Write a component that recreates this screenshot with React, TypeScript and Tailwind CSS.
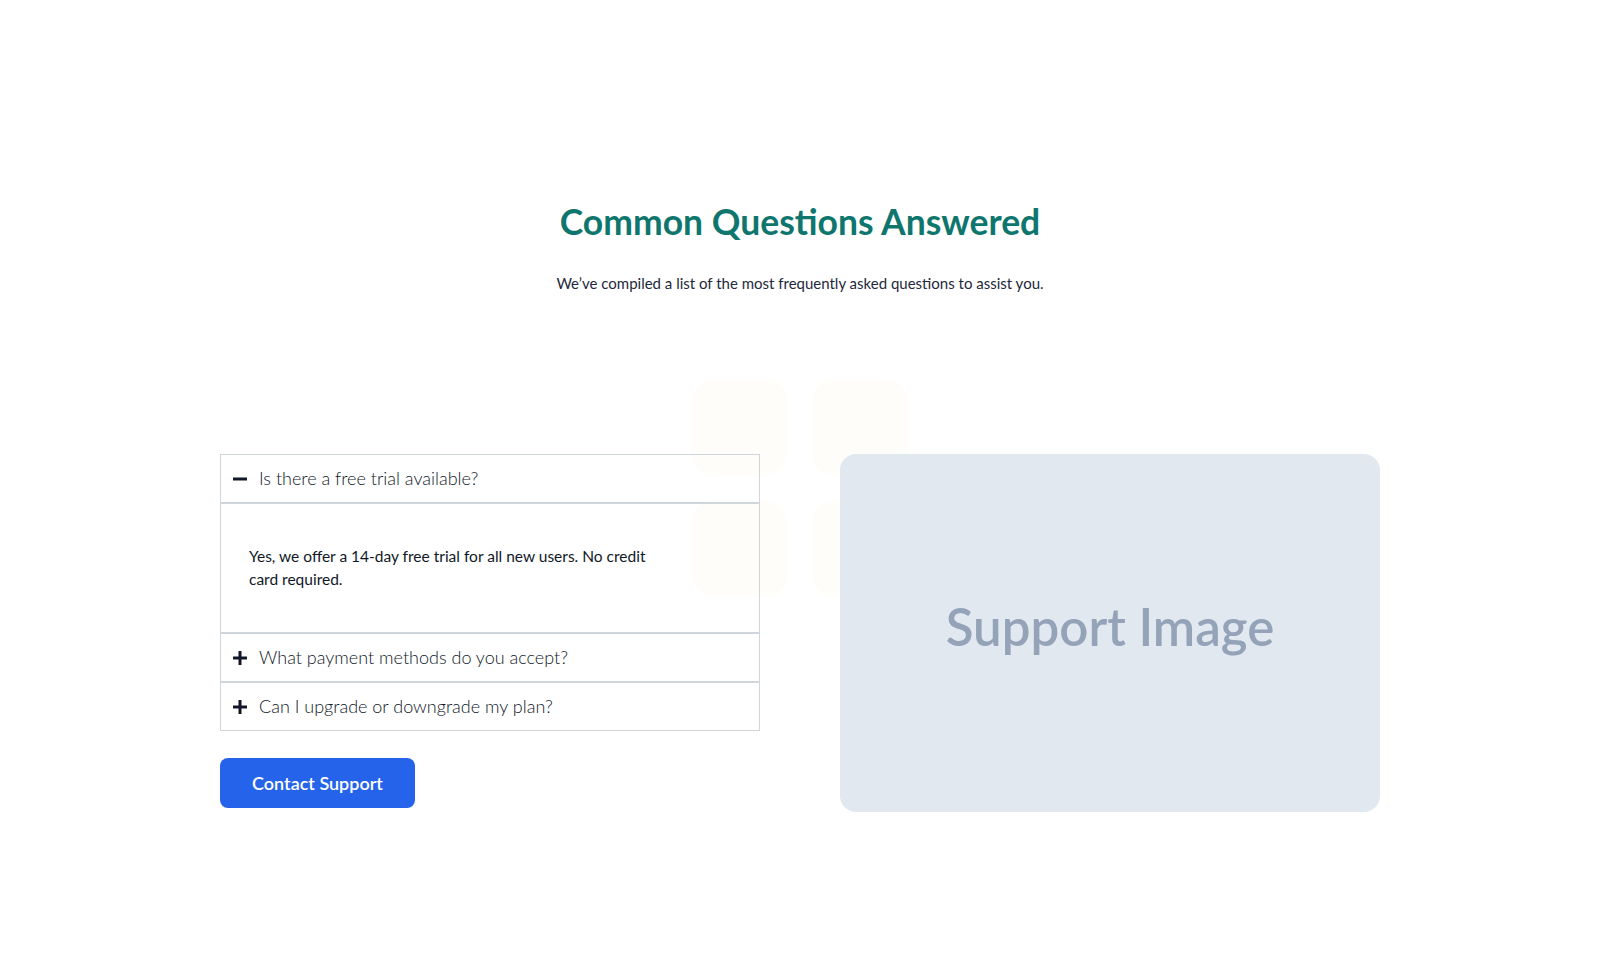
import { useState } from "react";

const faqs = [
  {
    q: "Is there a free trial available?",
    a: "Yes, we offer a 14-day free trial for all new users. No credit card required.",
  },
  {
    q: "What payment methods do you accept?",
    a: "We accept all major credit cards, PayPal and bank transfers.",
  },
  {
    q: "Can I upgrade or downgrade my plan?",
    a: "Yes, you can change your plan at any time from your account settings.",
  },
];

const PlusMinus = ({ open }: { open: boolean }) => (
  <svg width="14" height="14" viewBox="0 0 14 14" className="shrink-0 text-gray-900">
    <rect x="0" y="5.5" width="14" height="3" fill="currentColor" />
    {!open && <rect x="5.5" y="0" width="3" height="14" fill="currentColor" />}
  </svg>
);

export default function App() {
  const [openIdx, setOpenIdx] = useState<number | null>(0);

  return (
    <div className="min-h-screen bg-white" style={{ fontFamily: "Lato, 'Noto Sans', sans-serif" }}>
      <section className="relative mx-auto max-w-[1160px] pt-[200px]">
        {/* Heading */}
        <div className="text-center">
          <h2 className="text-[35.5px] leading-[44px] font-bold text-[#0f766e]">Common Questions Answered</h2>
          <p className="mt-[27px] text-[15px] leading-6 text-[#1e293b]">
            We’ve compiled a list of the most frequently asked questions to assist you.
          </p>
        </div>

        {/* Decorative squares */}
        <div className="pointer-events-none absolute left-1/2 top-[379px] grid -translate-x-1/2 grid-cols-2 gap-6">
          <div className="h-[97px] w-[97px] rounded-3xl bg-[#fefdf9]" />
          <div className="h-[97px] w-[97px] rounded-3xl bg-[#fefdf9]" />
          <div className="h-[97px] w-[97px] rounded-3xl bg-[#fefdf9]" />
          <div className="h-[97px] w-[97px] rounded-3xl bg-[#fefdf9]" />
        </div>

        <div className="relative mt-[159px] grid grid-cols-2 items-start gap-20">
          {/* Accordion */}
          <div>
            <div className="border border-gray-300">
              {faqs.map((f, i) => {
                const open = openIdx === i;
                return (
                  <div key={f.q} className={i > 0 ? "border-t-2 border-gray-300" : ""}>
                    <button
                      onClick={() => setOpenIdx(open ? null : i)}
                      className="flex h-[47px] w-full items-center gap-3 px-3 text-left"
                    >
                      <PlusMinus open={open} />
                      <span className="text-[18px] font-light text-gray-900">{f.q}</span>
                    </button>
                    {open && (
                      <div className="flex h-[130px] items-center border-t-2 border-gray-300 px-7">
                        <p className="max-w-[410px] text-[15.5px] leading-[23px] text-gray-900">{f.a}</p>
                      </div>
                    )}
                  </div>
                );
              })}
            </div>
            <button className="mt-[27px] h-[50px] w-[195px] rounded-lg bg-[#2563eb] text-[18px] font-semibold text-white">
              Contact Support
            </button>
          </div>

          {/* Image placeholder */}
          <div className="flex h-[358px] items-center justify-center rounded-2xl bg-[#e2e8f0] pb-3">
            <span className="text-[51px] font-semibold text-[#94a3b8]">Support Image</span>
          </div>
        </div>
      </section>
    </div>
  );
}
